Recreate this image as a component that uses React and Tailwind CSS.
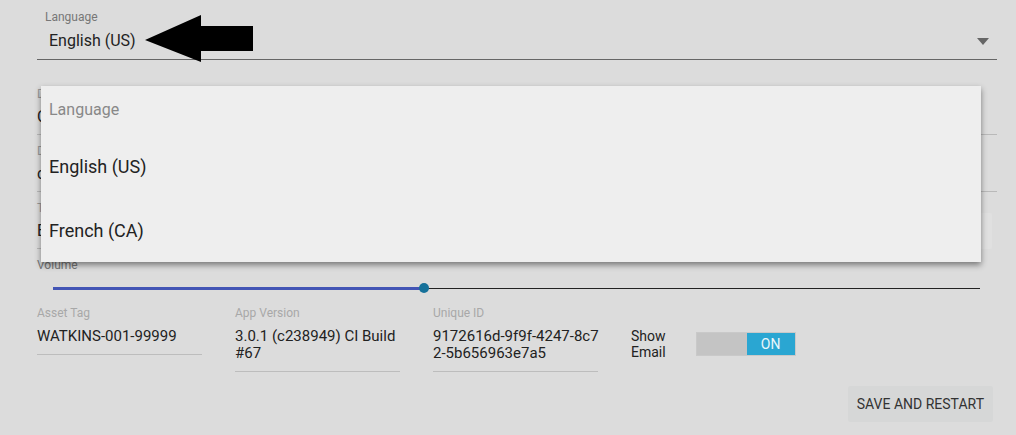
import React from "react";

const FONT = { fontFamily: "Roboto, 'Noto Sans', sans-serif" };

function Field({ label, value, className = "" }) {
  return (
    <div className={`border-b border-[#b9b9b9] pb-[7px] ${className}`}>
      <div className="text-[12px] leading-[14px] text-[#9a9a9a]">{label}</div>
      <div className="text-[16px] leading-[20px] text-[#222] mt-[6px]">{value}</div>
    </div>
  );
}

function InfoField({ label, lines }) {
  return (
    <div className="w-[165px] border-b border-[#bdbdbd] pb-[9px]">
      <div className="text-[12px] leading-[14px] text-[#a8a8a8]">{label}</div>
      <div className="text-[15px] leading-[17px] text-[#222] mt-[8px]">
        {lines.map((l) => (
          <div key={l} className="whitespace-nowrap">{l}</div>
        ))}
      </div>
    </div>
  );
}

export default function App() {
  return (
    <div style={FONT} className="relative w-[1016px] h-[435px] bg-[#dcdcdc] overflow-hidden">
      <div className="pl-[37px] pr-[19px] pt-[10px]">
        {/* Language select */}
        <div className="border-b border-[#666] pb-[8px]">
          <div className="pl-[8px] text-[12px] leading-[14px] text-[#777]">Language</div>
          <div className="flex items-center justify-between pl-[12px] pr-[8px] mt-[7px]">
            <span className="text-[16px] leading-[20px] text-[#222]">English (US)</span>
            <svg width="12" height="7" viewBox="0 0 12 7"><path d="M0 0h12L6 7z" fill="#666" /></svg>
          </div>
        </div>

        {/* fields hidden behind the open menu */}
        <div className="mt-[27px]">
          <Field label="Device Name" value="Cafeteria Kiosk" />
        </div>
        <div className="mt-[9px]">
          <Field label="Department" value="cafeteria" />
        </div>
        <div className="mt-[9px] flex items-end gap-[10px]">
          <Field label="Timezone" value="Eastern" className="flex-1" />
          <div className="w-[60px] h-[36px] bg-[#e0e0e0] rounded-[2px] mr-[5px]" />
        </div>

        {/* Volume */}
        <div className="mt-[9px] text-[12px] leading-[14px] text-[#777]">Volume</div>
        <div className="relative mt-[13px] ml-[16px] mr-[17px] h-[6px] flex items-center">
          <div className="h-[3px] w-[371px] bg-[#4355b5]" />
          <div className="h-[1px] flex-1 bg-[#222]" />
          <div className="absolute left-[366px] top-[-2px] w-[10px] h-[10px] rounded-full bg-[#16719a]" />
        </div>

        {/* info row */}
        <div className="mt-[15px] flex items-start gap-[33px]">
          <InfoField label="Asset Tag" lines={["WATKINS-001-99999"]} />
          <InfoField label="App Version" lines={["3.0.1 (c238949) CI Build", "#67"]} />
          <InfoField label="Unique ID" lines={["9172616d-9f9f-4247-8c7", "2-5b656963e7a5"]} />
          <div className="flex items-center gap-[30px] mt-[22px]">
            <div className="text-[14px] leading-[16px] text-[#222]">Show<br />Email</div>
            <div className="flex w-[100px] h-[24px] bg-[#c4c4c4] border border-[#c9c9c9]">
              <div className="flex-1" />
              <div className="w-[48px] bg-[#2aa6d2] flex items-center justify-center text-[14px] text-[#eaf6fb]">ON</div>
            </div>
          </div>
        </div>

        <div className="flex justify-end mt-[14px] pr-[4px]">
          <button className="h-[36px] px-[9px] bg-[#d6d7d7] rounded-[2px] text-[14px] text-[#333]">SAVE AND RESTART</button>
        </div>
      </div>

      {/* arrow annotation */}
      <svg className="absolute left-[144px] top-[14px]" width="112" height="50" viewBox="144 14 112 50">
        <path d="M145 40 L201 15 L201 26 L253 26 L253 51 L201 51 L201 62 Z" fill="#000" />
      </svg>

      {/* open menu */}
      <div className="absolute left-[41px] top-[86px] w-[940px] h-[176px] bg-[#eeeeee] shadow-[0_3px_6px_rgba(0,0,0,0.45)]">
        <div className="pl-[8px] pt-[14px] text-[16px] leading-[20px] text-[#888]">Language</div>
        <div className="pl-[8px] mt-[36px] text-[18px] leading-[22px] text-[#222]">English (US)</div>
        <div className="pl-[8px] mt-[42px] text-[18px] leading-[22px] text-[#222]">French (CA)</div>
      </div>
    </div>
  );
}
